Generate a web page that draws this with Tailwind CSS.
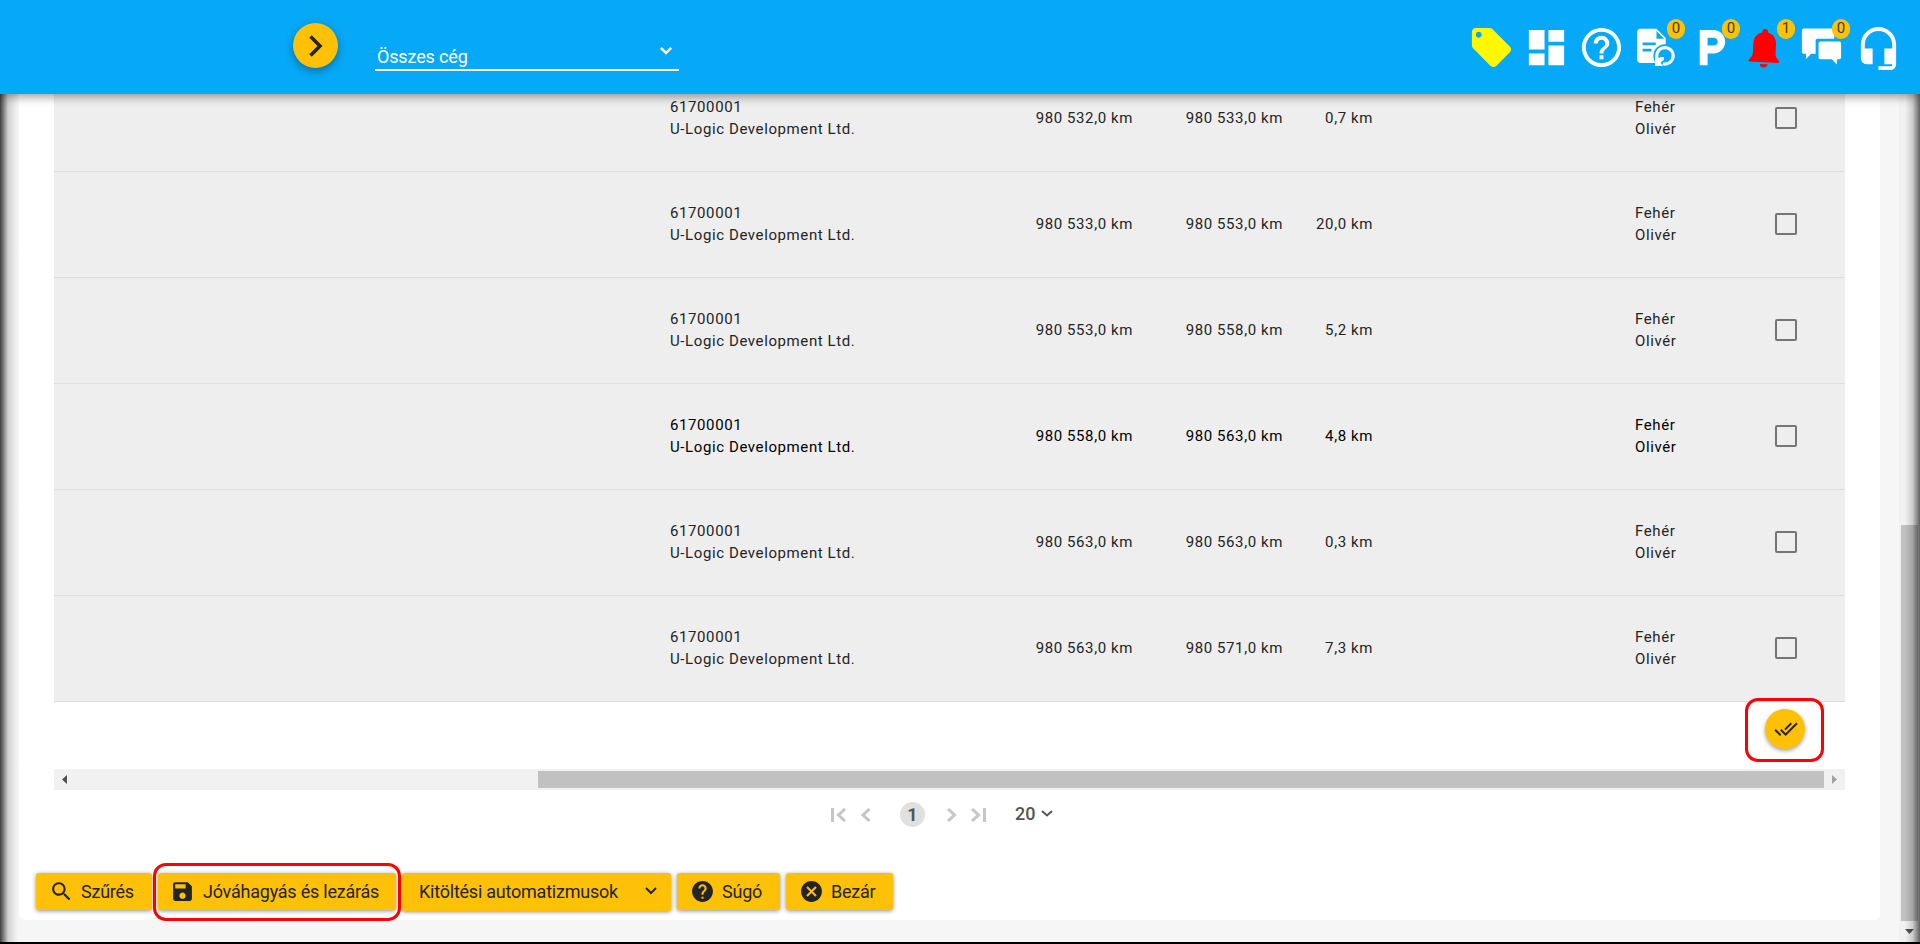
<!DOCTYPE html>
<html lang="hu">
<head>
  <meta charset="UTF-8">
  <title>U-Logic</title>
  <script src="https://cdn.jsdelivr.net/npm/@tailwindcss/browser@4"></script>
</head>
<body class="bg-[#f6f6f6] font-['Roboto',sans-serif] text-[#242424]">
  <div class="relative flex flex-col h-[944px] overflow-hidden border-b-2 border-black">

    <header class="relative z-20 flex shrink-0 h-[94px] bg-[#05a9f7] shadow-[0_2px_10px_rgba(0,0,0,0.45)]">
      <button class="ml-[293px] mt-[23px] w-[45px] h-[45px] rounded-full bg-[#ffc107] shadow-[0_3px_8px_rgba(0,0,0,0.35)] flex items-center justify-center">
        <svg class="w-[14px] h-[22px]" viewBox="0 0 14 22" fill="none" stroke="currentColor" stroke-width="3.500"><path d="M1.500 1.500L11 11l-9.500 9.500"/></svg>
      </button>
      <div class="ml-[37px] mt-[39px] w-[304px] h-8 border-b-2 border-white pl-[2px] pr-[2px] flex justify-between text-white">
        <span class="text-lg leading-[35px] tracking-[-0.15px]">Összes cég</span>
        <svg class="mt-px w-[22px] h-[22px]" viewBox="0 0 24 24" fill="currentColor"><path d="M7.400 7.600L12 12.200l4.600-4.600L18.600 9.500 12 16 5.400 9.500z"/></svg>
      </div>
      <nav class="ml-auto mr-[18px] mt-6 flex gap-2 text-white">
        <svg class="w-[47px] h-[47px] text-[#fff800]" viewBox="0 0 24 24" fill="currentColor"><path d="M21.410 11.580l-9-9C12.050 2.220 11.550 2 11 2H4c-1.100 0-2 .9-2 2v7c0 .55.22 1.050.59 1.420l9 9c.36.36.86.58 1.410.58.55 0 1.050-.22 1.410-.59l7-7c.37-.36.59-.86.59-1.410 0-.55-.23-1.060-.59-1.420zM5.500 7C4.670 7 4 6.330 4 5.500S4.670 4 5.500 4 7 4.670 7 5.500 6.330 7 5.500 7z"/></svg>
        <svg class="w-[47px] h-[47px]" viewBox="0 0 24 24" fill="currentColor"><path d="M3 13h8V3H3v10zm0 8h8v-6H3v6zm10 0h8V11h-8v10zm0-18v6h8V3h-8z"/></svg>
        <svg class="w-[47px] h-[47px]" viewBox="0 0 24 24" fill="currentColor"><path d="M11 18h2v-2h-2v2zm1-16C6.480 2 2 6.480 2 12s4.480 10 10 10 10-4.480 10-10S17.520 2 12 2zm0 18c-4.410 0-8-3.590-8-8s3.590-8 8-8 8 3.590 8 8-3.590 8-8 8zm0-14c-2.210 0-4 1.790-4 4h2c0-1.100.9-2 2-2s2 .9 2 2c0 2-3 1.750-3 5h2c0-2.250 3-2.500 3-5 0-2.210-1.790-4-4-4z"/></svg>
        <div class="relative">
          <svg class="w-[47px] h-[47px]" viewBox="0 0 24 24" fill="currentColor">
            <path fill-rule="evenodd" d="M4 2.400h8l4.700 4.700V18a1.900 1.900 0 0 1-1.900 1.900H4A1.900 1.900 0 0 1 2.100 18V4.300A1.900 1.900 0 0 1 4 2.400zM12 3.600v3.900h3.900zM4.900 9.500v1.300h6.700V9.500zM4.900 12.700V14h4.500v-1.300z"/>
            <circle cx="16.400" cy="16.300" r="6" fill="#05a9f7"/>
            <path fill="none" stroke="currentColor" stroke-width="1.600" d="M12.900 18.700a4.200 4.200 0 1 1 2.300 1.600"/>
            <path d="M11.300 21.400v-4.600l1.300 1.300 1.500-1.300h1.700v1.500l-1.700 1.500 1.200 1.600z"/>
          </svg>
          <span class="absolute left-[34px] -top-[5px] w-[18px] h-5 rounded-full bg-[#ffc107] text-[#3a3a3a] text-[15px] leading-[19px] text-center">0</span>
        </div>
        <div class="relative">
          <svg class="w-[47px] h-[47px]" viewBox="0 0 24 24" fill="currentColor"><path d="M13 3H6v18h4v-6h3c3.310 0 6-2.690 6-6s-2.690-6-6-6zm.2 8H10V7h3.200c1.100 0 2 .9 2 2s-.9 2-2 2z"/></svg>
          <span class="absolute left-[34px] -top-[5px] w-[18px] h-5 rounded-full bg-[#ffc107] text-[#3a3a3a] text-[15px] leading-[19px] text-center">0</span>
        </div>
        <div class="relative">
          <svg class="w-[47px] h-[47px] text-[#f00] rotate-3 -translate-x-[2px]" viewBox="0 0 24 24" fill="currentColor"><path d="M12 22.200c1.100 0 2-.7 2-1.700h-4c0 1 .89 1.700 2 1.700zM13.500 4.400V4c0-.83-.67-1.500-1.500-1.500s-1.500.67-1.500 1.500v.4C7.700 5 6.200 7.400 6.200 10.200v4.600c0 1.500-.6 2.400-1.900 3.700v1h15.400v-1c-1.300-1.300-1.900-2.200-1.900-3.700v-4.600c0-2.800-1.500-5.200-4.300-5.800z"/></svg>
          <span class="absolute left-[34px] -top-[5px] w-[18px] h-5 rounded-full bg-[#ffc107] text-[#3a3a3a] text-[15px] leading-[19px] text-center">1</span>
        </div>
        <div class="relative">
          <svg class="w-[47px] h-[47px]" viewBox="0 0 24 24" fill="currentColor"><path d="M3 2.300h14.500a1 1 0 0 1 1 1V7.500H10a1 1 0 0 0-1 1v6.700H6.700l-2.600 2.700v-2.700H3a1 1 0 0 1-1-1V3.300a1 1 0 0 1 1-1zM11.400 8.900h9.700a.9.900 0 0 1 .9.900v7.300a.9.900 0 0 1-.9.900h-1.200v2.700L17.200 18h-5.800a.9.900 0 0 1-.9-.9V9.800a.9.900 0 0 1 .9-.9z"/></svg>
          <span class="absolute left-[34px] -top-[5px] w-[18px] h-5 rounded-full bg-[#ffc107] text-[#3a3a3a] text-[15px] leading-[19px] text-center">0</span>
        </div>
        <svg class="mt-px ml-[2px] w-[47px] h-[47px]" viewBox="0 0 24 24" fill="currentColor"><path d="M12 1c-4.970 0-9 4.030-9 9v7c0 1.660 1.340 3 3 3h3v-8H5v-2c0-3.870 3.130-7 7-7s7 3.130 7 7v2h-4v8h4v1h-7v2h6c1.660 0 3-1.340 3-3V10c0-4.970-4.030-9-9-9z"/></svg>
      </nav>
    </header>

    <main class="ml-[19px] w-[1861px] h-[826px] bg-white rounded-b-md">
      <div class="ml-[35px] w-[1791px]">
        <div id="rows" class="-mt-7"></div>

        <div class="h-[67px] relative">
          <button class="absolute left-[1711px] top-[7px] w-10 h-10 rounded-full bg-[#ffc107] shadow-[0_2px_4px_rgba(0,0,0,0.35)] flex items-center justify-center">
            <svg class="ml-px w-6 h-6" viewBox="0 0 24 24" fill="currentColor"><path d="M18 7l-1.410-1.410-6.340 6.340 1.410 1.410L18 7zm4.240-1.410L11.660 16.170 7.480 12l-1.410 1.410L11.660 19l12-12-1.420-1.410zM.41 13.410L6 19l1.410-1.410L1.830 12 .41 13.410z"/></svg>
          </button>
          <div class="absolute left-[1691px] -top-1 w-[79px] h-16 border-3 border-[#f00] rounded-[13px]"></div>
        </div>

        <div class="h-[21px] bg-[#f1f1f1] flex items-center">
          <svg class="ml-2 w-[5px] h-[9px] text-[#505050]" viewBox="0 0 5 9" fill="currentColor"><path d="M5 0v9L0 4.500z"/></svg>
          <div class="ml-[471px] w-[1286px] h-[17px] bg-[#c1c1c1]"></div>
          <svg class="ml-2 w-[5px] h-[9px] text-[#a3a3a3]" viewBox="0 0 5 9" fill="currentColor"><path d="M0 0v9l5-4.500z"/></svg>
        </div>
      </div>

      <div class="mt-3 ml-[812px] h-[25px] flex items-center text-[#c6c6c6]">
        <svg class="w-[15px] h-[14px]" viewBox="0 0 15 14" fill="none" stroke="currentColor" stroke-width="3"><path d="M1.500 0v14M14 1L7.500 7l6.500 6"/></svg>
        <svg class="ml-[15px] w-[10px] h-[14px]" viewBox="0 0 10 14" fill="none" stroke="currentColor" stroke-width="3"><path d="M8.500 1L2 7l6.500 6"/></svg>
        <span class="ml-[29px] w-[25px] h-[25px] rounded-full bg-[#e0e0e0] text-[#555] text-lg leading-[25px] font-bold text-center">1</span>
        <svg class="ml-[22px] w-[10px] h-[14px]" viewBox="0 0 10 14" fill="none" stroke="currentColor" stroke-width="3"><path d="M1 1l6.500 6L1 13"/></svg>
        <svg class="ml-[14px] w-[15px] h-[14px]" viewBox="0 0 15 14" fill="none" stroke="currentColor" stroke-width="3"><path d="M13.500 0v14M1 1l6.500 6L1 13"/></svg>
        <span class="ml-[29px] -mt-0.5 text-lg leading-[25px] font-medium text-[#555]">20</span>
        <svg class="ml-[6px] -mt-0.5 w-3 h-[7px] text-[#555]" viewBox="0 0 12 7" fill="none" stroke="currentColor" stroke-width="2"><path d="M1 1l5 4.500L11 1"/></svg>
      </div>

      <div class="relative mt-[46px] ml-[17px] flex items-start gap-[6px] text-lg leading-[37px] tracking-[-0.23px]">
        <button class="w-[116px] h-[37px] pl-[13px] rounded-[3px] bg-[#ffc107] shadow-[0_1px_4px_rgba(0,0,0,0.45)] flex items-center">
          <svg class="w-[25px] h-[25px]" viewBox="0 0 24 24" fill="currentColor"><path d="M15.500 14h-.79l-.28-.27C15.410 12.590 16 11.110 16 9.500 16 5.910 13.090 3 9.500 3S3 5.910 3 9.500 5.910 16 9.500 16c1.610 0 3.090-.59 4.230-1.570l.27.28v.79l5 4.990L20.490 19l-4.990-5zm-6 0C7.010 14 5 11.990 5 9.500S7.010 5 9.500 5 14 7.010 14 9.500 11.990 14 9.500 14z"/></svg>
          <span class="ml-[7px]">Szűrés</span>
        </button>
        <button class="w-[238px] h-[37px] pl-[13px] rounded-[3px] bg-[#ffc107] shadow-[0_1px_4px_rgba(0,0,0,0.45)] flex items-center">
          <svg class="-ml-px w-[25px] h-[25px]" viewBox="0 0 24 24" fill="currentColor"><path d="M17 3H5c-1.110 0-2 .9-2 2v14c0 1.100.89 2 2 2h14c1.100 0 2-.9 2-2V7l-4-4zm-5 16c-1.660 0-3-1.340-3-3s1.340-3 3-3 3 1.340 3 3-1.340 3-3 3zm3-10H5V5h10v4z"/></svg>
          <span class="ml-2">Jóváhagyás és lezárás</span>
        </button>
        <button class="w-[269px] h-[38px] pl-[17px] pr-[14px] rounded-[3px] bg-[#ffc107] shadow-[0_1px_4px_rgba(0,0,0,0.45)] flex items-center justify-between">
          <span class="-mt-px">Kitöltési automatizmusok</span>
          <svg class="-mt-0.5 w-3 h-2" viewBox="0 0 12 8" fill="none" stroke="currentColor" stroke-width="2"><path d="M1 1l5 5 5-5"/></svg>
        </button>
        <button class="w-[103px] h-[37px] pl-[13px] rounded-[3px] bg-[#ffc107] shadow-[0_1px_4px_rgba(0,0,0,0.45)] flex items-center">
          <svg class="w-[25px] h-[25px]" viewBox="0 0 24 24" fill="currentColor"><path d="M12 2C6.480 2 2 6.480 2 12s4.480 10 10 10 10-4.480 10-10S17.520 2 12 2zm1 17h-2v-2h2v2zm2.070-7.750l-.9.920C13.450 12.900 13 13.500 13 15h-2v-.5c0-1.100.45-2.100 1.170-2.830l1.240-1.260c.37-.36.59-.86.59-1.410 0-1.100-.9-2-2-2s-2 .9-2 2H8c0-2.210 1.790-4 4-4s4 1.790 4 4c0 .88-.36 1.680-.93 2.250z"/></svg>
          <span class="ml-[7px]">Súgó</span>
        </button>
        <button class="w-[107px] h-[37px] pl-[13px] rounded-[3px] bg-[#ffc107] shadow-[0_1px_4px_rgba(0,0,0,0.45)] flex items-center">
          <svg class="w-[25px] h-[25px]" viewBox="0 0 24 24" fill="currentColor"><path d="M12 2C6.470 2 2 6.470 2 12s4.470 10 10 10 10-4.470 10-10S17.530 2 12 2zm5 13.590L15.590 17 12 13.410 8.410 17 7 15.590 10.590 12 7 8.410 8.410 7 12 10.590 15.590 7 17 8.410 13.410 12 17 15.590z"/></svg>
          <span class="ml-[7px]">Bezár</span>
        </button>
        <div class="absolute left-[117px] -top-[10px] w-[248px] h-[58px] border-3 border-[#f00] rounded-[13px]"></div>
      </div>
    </main>

    <!-- page scrollbar -->
    <div class="absolute right-0 top-[94px] bottom-0 w-[21px] bg-[#f1f1f1]">
      <div class="mt-[431px] ml-[2px] w-[17px] h-[396px] bg-[#c1c1c1]"></div>
      <svg class="mt-2 ml-[6px] w-[9px] h-[5px] text-[#505050]" viewBox="0 0 9 5" fill="currentColor"><path d="M0 0h9L4.500 5z"/></svg>
    </div>

    <!-- edge shadows -->
    <div class="absolute left-0 top-[94px] bottom-0 w-[18px] bg-linear-to-r from-black/75 via-black/15 via-45% to-transparent"></div>
    <div class="absolute right-0 top-[94px] bottom-0 w-[15px] bg-linear-to-l from-black/60 via-black/15 via-50% to-transparent"></div>
  </div>

  <script>
    const trips = [
      ['980 532,0 km', '980 533,0 km', '0,7 km'],
      ['980 533,0 km', '980 553,0 km', '20,0 km'],
      ['980 553,0 km', '980 558,0 km', '5,2 km'],
      ['980 558,0 km', '980 563,0 km', '4,8 km'],
      ['980 563,0 km', '980 563,0 km', '0,3 km'],
      ['980 563,0 km', '980 571,0 km', '7,3 km'],
    ];

    document.getElementById('rows').innerHTML = trips.map((t, i) => `
      <div class="flex items-center h-[106px] pb-[2px] bg-[#eee] border-b border-[#dedede] text-[15px] leading-[22px] tracking-[0.6px] ${i === 3 ? 'text-black' : ''}">
        <div class="w-[616px] shrink-0"></div>
        <div class="w-[262px]">61700001<br>U-Logic Development Ltd.</div>
        <div class="w-[201px] text-right">${t[0]}</div>
        <div class="w-[150px] text-right">${t[1]}</div>
        <div class="w-[90px] text-right">${t[2]}</div>
        <div class="ml-[262px] w-[140px]">Fehér<br>Olivér</div>
        <div class="w-[22px] h-[22px] border-2 border-[#757575] rounded-[2px]"></div>
      </div>`).join('');
  </script>
</body>
</html>
